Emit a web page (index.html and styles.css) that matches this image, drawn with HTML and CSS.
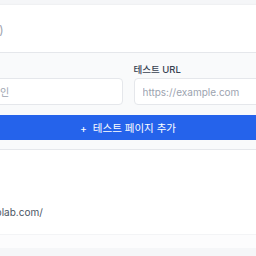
FILE: index.html
```html
<!DOCTYPE html>
<html lang="ko">
<head>
    <meta charset="UTF-8">
    <meta name="viewport" content="width=device-width, initial-scale=1.0">
    <title>테스트 페이지 관리</title>
    <link rel="stylesheet" href="styles.css">
</head>
<body>
    <div class="card">
        <div class="card-header">
            <svg class="header-icon" viewBox="0 0 24 24" fill="none" stroke="#2563eb" stroke-width="2" stroke-linecap="round" stroke-linejoin="round">
                <path d="M14 2H6a2 2 0 0 0-2 2v16a2 2 0 0 0 2 2h12a2 2 0 0 0 2-2V8z"/>
                <path d="M14 2v6h6"/>
            </svg>
            <h2>테스트 페이지 <span class="count">(0)</span></h2>
        </div>

        <div class="add-form">
            <div class="form-row">
                <div class="field">
                    <label>페이지 이름</label>
                    <input type="text" placeholder="예시: 메인 페이지, 로그인">
                </div>
                <div class="field">
                    <label>테스트 URL</label>
                    <input type="text" placeholder="https://example.com">
                </div>
            </div>
            <button class="add-btn">+&nbsp; 테스트 페이지 추가</button>
        </div>

        <ul class="page-list">
            <li class="page-item">
                <span class="page-num">1</span>
                <div class="page-info">
                    <div class="page-name">메인 페이지</div>
                    <div class="page-url">https://www.toplab.com/</div>
                </div>
            </li>
        </ul>
        <div class="card-footer"></div>
    </div>
</body>
</html>
```

FILE: styles.css
```css
body {
    font-family: Inter, "Noto Sans CJK KR", sans-serif;
    margin: 0;
    padding: 5px 0 0;
    background-color: #f5f6f8;
    color: #1f2937;
}
.card {
    width: 500px;
    margin-left: -122px;
    background: #fff;
    box-shadow: 0 1px 3px rgba(0,0,0,0.12);
}
.card-header {
    height: 47px;
    padding: 0 16px;
    display: flex;
    align-items: center;
    gap: 6px;
    border-bottom: 1px solid #e5e7eb;
}
.header-icon {
    width: 15px;
    height: 15px;
}
.card-header h2 {
    margin: 0;
    font-size: 12px;
    font-weight: 600;
    color: #111827;
}
.card-header .count {
    font-weight: 400;
    color: #9ca3af;
}
.add-form {
    background: #f9fafb;
    padding: 10px 16px 9px;
    border-bottom: 1px solid #e5e7eb;
}
.form-row {
    display: grid;
    grid-template-columns: 1fr 1fr;
    gap: 11px;
    margin-bottom: 10px;
}
.field label {
    display: block;
    font-size: 9.5px;
    line-height: 13px;
    font-weight: 500;
    color: #374151;
    margin-bottom: 2px;
}
.field input {
    box-sizing: border-box;
    width: 100%;
    height: 27px;
    padding: 0 8px;
    border: 1px solid #e5e7eb;
    border-radius: 4px;
    background: #fff;
    font-family: inherit;
    font-size: 10px;
}
.field input::placeholder {
    color: #9ca3af;
}
.add-btn {
    display: block;
    width: 100%;
    height: 25px;
    border: none;
    border-radius: 4px;
    background: #2563eb;
    color: #fff;
    font-family: inherit;
    font-size: 10.5px;
    font-weight: 400;
    cursor: pointer;
}
.page-list {
    list-style: none;
    margin: 0;
    padding: 0;
}
.page-item {
    height: 85px;
    box-sizing: border-box;
    padding: 35px 16px 0;
    display: flex;
    align-items: flex-start;
    gap: 8px;
    border-bottom: 1px solid #f3f4f6;
}
.page-num {
    flex: none;
    width: 24px;
    height: 24px;
    margin-top: 3px;
    border-radius: 50%;
    background: #eff6ff;
    color: #2563eb;
    font-size: 11px;
    font-weight: 600;
    display: flex;
    align-items: center;
    justify-content: center;
}
.page-name {
    font-size: 11px;
    line-height: 16px;
    font-weight: 500;
    color: #111827;
    margin-bottom: 4px;
}
.page-url {
    font-size: 10px;
    line-height: 14px;
    color: #4b5563;
}
.card-footer {
    height: 13px;
    background: #fcfcfd;
}
```
